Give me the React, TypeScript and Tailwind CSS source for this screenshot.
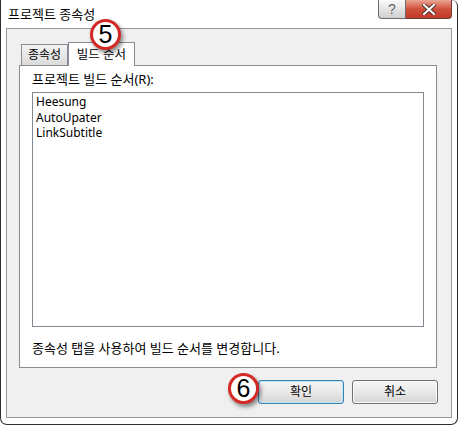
import React from 'react';

const font = '"Noto Sans", "Noto Sans CJK KR", sans-serif';

function Badge({ n, className }: { n: string; className: string }) {
    return (
        <div
            className={`absolute z-20 w-[31px] h-[31px] rounded-full bg-white border-[3px] border-[#d42a25] flex items-center justify-center shadow-[2px_3px_4px_rgba(0,0,0,0.45)] ${className}`}
        >
            <span className="text-[25px] leading-none text-black" style={{ fontFamily: '"Liberation Sans", Arial, sans-serif' }}>
                {n}
            </span>
        </div>
    );
}

function Button({ label, primary }: { label: string; primary?: boolean }) {
    return (
        <button
            className={
                'w-[86px] h-[24px] rounded-[3px] border text-[12px] text-black bg-gradient-to-b from-[#f6f6f6] via-[#e9e9e9] to-[#d4d4d4] ' +
                (primary
                    ? 'border-[#3c7fb1] shadow-[inset_0_0_0_1px_#bfe6f8]'
                    : 'border-[#707070] shadow-[inset_0_0_0_1px_#fafafa]')
            }
        >
            {label}
        </button>
    );
}

export default function App() {
    return (
        <div className="w-[459px] h-[426px] bg-white" style={{ fontFamily: font }}>
            <div className="w-[458px] h-[425px] border-l border-r border-b border-[#2e2e2e] rounded-b-[7px] rounded-tr-[6px] bg-white flex flex-col">
                {/* Title bar */}
                <div className="h-[28px] flex items-start shrink-0">
                    <span className="ml-[7px] mt-[5px] text-[13px] text-black">프로젝트 종속성</span>
                    <div className="ml-auto mr-[5px] flex h-[19px]">
                        <div className="w-[28px] h-[19px] border border-[#6b6b6b] border-t-0 rounded-bl-[4px] bg-gradient-to-b from-[#fafafa] via-[#e4e4e4] to-[#cfcfcf] flex items-center justify-center">
                            <span className="text-[14px] leading-none text-[#666]" style={{ fontFamily: '"Liberation Sans", sans-serif' }}>?</span>
                        </div>
                        <div className="w-[46px] h-[19px] border border-[#6b3a34] border-l-0 border-t-0 rounded-br-[4px] bg-gradient-to-b from-[#e9a594] via-[#d1503c] to-[#c13a28] flex items-center justify-center">
                            <svg width="14" height="11" viewBox="0 0 14 11">
                                <path d="M2 1 L12 10 M12 1 L2 10" stroke="#4a2a24" strokeWidth="4" strokeLinecap="square" />
                                <path d="M2 1 L12 10 M12 1 L2 10" stroke="#ffffff" strokeWidth="2.2" strokeLinecap="square" />
                            </svg>
                        </div>
                    </div>
                </div>

                {/* Client area */}
                <div className="ml-[5px] mr-[5px] h-[390px] border border-[#9a9a9a] bg-[#f0f0f0] flex flex-col">
                    <div className="relative ml-[12px] mr-[14px] mt-[13px]">
                        {/* Tab headers */}
                        <div className="flex items-end h-[23px] pl-[2px] relative z-10">
                            <div className="w-[47px] h-[21px] border border-b-0 border-[#898c95] bg-gradient-to-b from-[#f3f3f3] to-[#dadada] text-[12px] flex items-center justify-center text-black">
                                종속성
                            </div>
                            <div className="w-[67px] h-[24px] -mb-[1px] border border-b-0 border-[#898c95] bg-white text-[12.5px] flex items-start pt-[3px] justify-center text-black">
                                빌드 순서
                            </div>
                        </div>
                        <Badge n="5" className="left-[71px] -top-[23px]" />

                        {/* Tab panel */}
                        <div className="h-[303px] border border-[#898c95] bg-white px-[12px] pt-[5px] flex flex-col">
                            <div className="text-[13px] leading-[16px] text-black">프로젝트 빌드 순서(R):</div>
                            <div className="mt-[5px] h-[235px] border border-[#828790] bg-white px-[3px] pt-[1px] text-[12px] leading-[15.5px] text-black">
                                <div>Heesung</div>
                                <div>AutoUpater</div>
                                <div>LinkSubtitle</div>
                            </div>
                            <div className="mt-[13px] text-[13px] leading-[16px] text-black">종속성 탭을 사용하여 빌드 순서를 변경합니다.</div>
                        </div>
                    </div>

                    {/* Buttons */}
                    <div className="relative flex justify-end gap-[8px] mr-[13px] mt-[12px]">
                        <Badge n="6" className="left-[221px] -top-[7px]" />
                        <Button label="확인" primary />
                        <Button label="취소" />
                    </div>
                </div>
            </div>
        </div>
    );
}
